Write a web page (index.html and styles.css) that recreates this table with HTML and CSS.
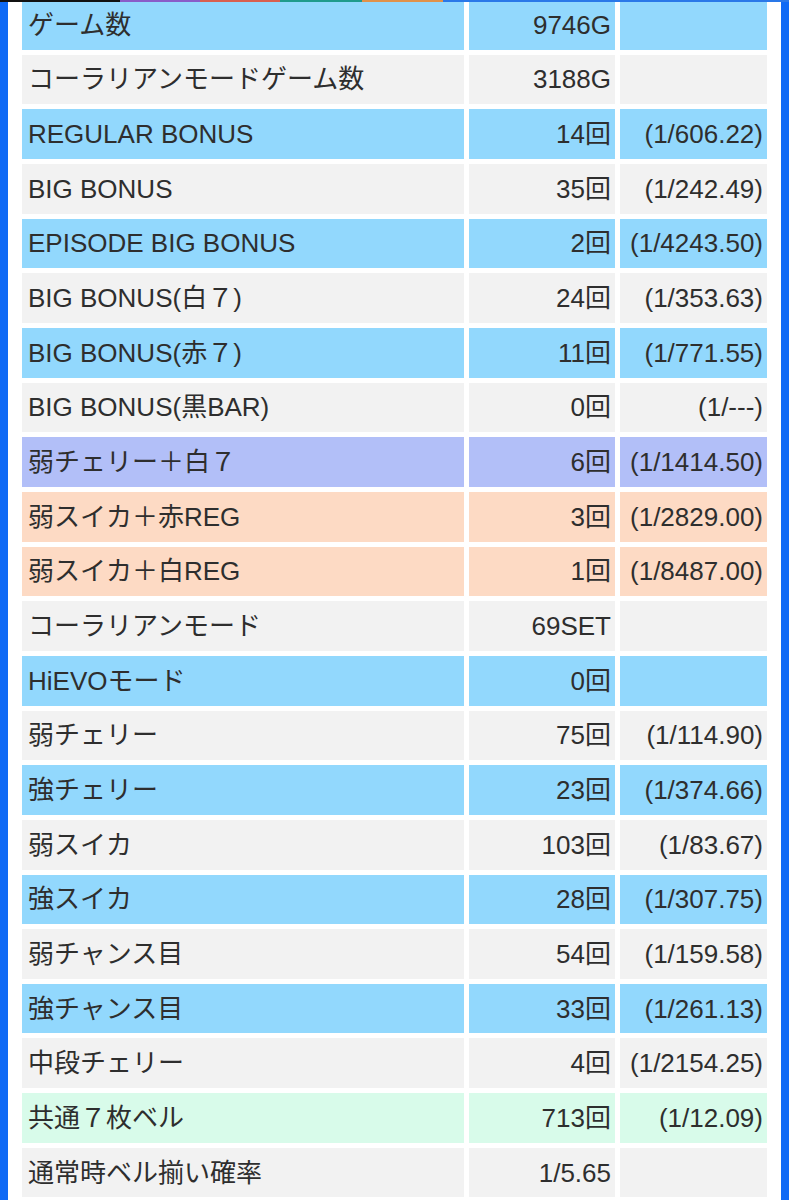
FILE: index.html
```html
<!DOCTYPE html>
<html lang="ja">
<head>
<meta charset="utf-8">
<title>データ</title>
<link rel="stylesheet" href="styles.css">
</head>
<body>
<div class="topbar">
  <span class="seg s1"></span><span class="seg s2"></span><span class="seg s3"></span><span class="seg s4"></span><span class="seg s5"></span><span class="seg s6"></span>
</div>
<div class="frame">
  <table class="data">
    <colgroup><col class="c1"><col class="c2"><col class="c3"></colgroup>
    <tbody>
      <tr class="blue"><td>ゲーム数</td><td class="num">9746G</td><td class="num"></td></tr>
      <tr class="grey"><td>コーラリアンモードゲーム数</td><td class="num">3188G</td><td class="num"></td></tr>
      <tr class="blue"><td>REGULAR BONUS</td><td class="num">14回</td><td class="num">(1/606.22)</td></tr>
      <tr class="grey"><td>BIG BONUS</td><td class="num">35回</td><td class="num">(1/242.49)</td></tr>
      <tr class="blue"><td>EPISODE BIG BONUS</td><td class="num">2回</td><td class="num">(1/4243.50)</td></tr>
      <tr class="grey"><td>BIG BONUS(白７)</td><td class="num">24回</td><td class="num">(1/353.63)</td></tr>
      <tr class="blue"><td>BIG BONUS(赤７)</td><td class="num">11回</td><td class="num">(1/771.55)</td></tr>
      <tr class="grey"><td>BIG BONUS(黒BAR)</td><td class="num">0回</td><td class="num">(1/---)</td></tr>
      <tr class="purple"><td>弱チェリー＋白７</td><td class="num">6回</td><td class="num">(1/1414.50)</td></tr>
      <tr class="peach"><td>弱スイカ＋赤REG</td><td class="num">3回</td><td class="num">(1/2829.00)</td></tr>
      <tr class="peach"><td>弱スイカ＋白REG</td><td class="num">1回</td><td class="num">(1/8487.00)</td></tr>
      <tr class="grey"><td>コーラリアンモード</td><td class="num">69SET</td><td class="num"></td></tr>
      <tr class="blue"><td>HiEVOモード</td><td class="num">0回</td><td class="num"></td></tr>
      <tr class="grey"><td>弱チェリー</td><td class="num">75回</td><td class="num">(1/114.90)</td></tr>
      <tr class="blue"><td>強チェリー</td><td class="num">23回</td><td class="num">(1/374.66)</td></tr>
      <tr class="grey"><td>弱スイカ</td><td class="num">103回</td><td class="num">(1/83.67)</td></tr>
      <tr class="blue"><td>強スイカ</td><td class="num">28回</td><td class="num">(1/307.75)</td></tr>
      <tr class="grey"><td>弱チャンス目</td><td class="num">54回</td><td class="num">(1/159.58)</td></tr>
      <tr class="blue"><td>強チャンス目</td><td class="num">33回</td><td class="num">(1/261.13)</td></tr>
      <tr class="grey"><td>中段チェリー</td><td class="num">4回</td><td class="num">(1/2154.25)</td></tr>
      <tr class="mint"><td>共通７枚ベル</td><td class="num">713回</td><td class="num">(1/12.09)</td></tr>
      <tr class="grey"><td>通常時ベル揃い確率</td><td class="num">1/5.65</td><td class="num"></td></tr>
    </tbody>
  </table>
</div>
</body>
</html>
```

FILE: styles.css
```css
html, body {
  margin: 0;
  padding: 0;
  background: #ffffff;
}
body {
  font-family: "Liberation Sans", "Noto Sans CJK JP", sans-serif;
  color: #2e2e2e;
  overflow: hidden;
}
.topbar {
  position: absolute;
  top: 0;
  left: 0;
  width: 789px;
  height: 2px;
  display: flex;
  z-index: 2;
}
.seg { display: block; height: 2px; }
.s1 { width: 120px; background: #111111; }
.s2 { width: 80px; background: #8a5cc8; }
.s3 { width: 80px; background: #d9604f; }
.s4 { width: 82px; background: #1f9b8c; }
.s5 { width: 81px; background: #e0924a; }
.s6 { flex: 1; background: #2a78e8; }
.frame {
  border-left: 8px solid #0f6af5;
  border-right: 8px solid #0f6af5;
  padding: 0 9px;
  min-height: 1200px;
  box-sizing: border-box;
  background: #ffffff;
}
.data {
  border-collapse: separate;
  border-spacing: 5px;
  margin-top: -5px;
  table-layout: fixed;
  width: 755px;
  font-size: 26px;
  line-height: 1.2;
}
.c1 { width: 442px; }
.c2 { width: 146px; }
.c3 { width: 147px; }
.data td {
  height: 49.67px;
  padding: 1px 4px 0 6px;
  box-sizing: border-box;
  vertical-align: middle;
  white-space: nowrap;
  overflow: hidden;
}
.data td.num {
  text-align: right;
  padding: 1px 4px 0 2px;
}
.blue td { background: #92d8fd; }
.grey td { background: #f2f2f2; }
.purple td { background: #b2bff8; }
.peach td { background: #fddac4; }
.mint td { background: #d8fbea; }
```
